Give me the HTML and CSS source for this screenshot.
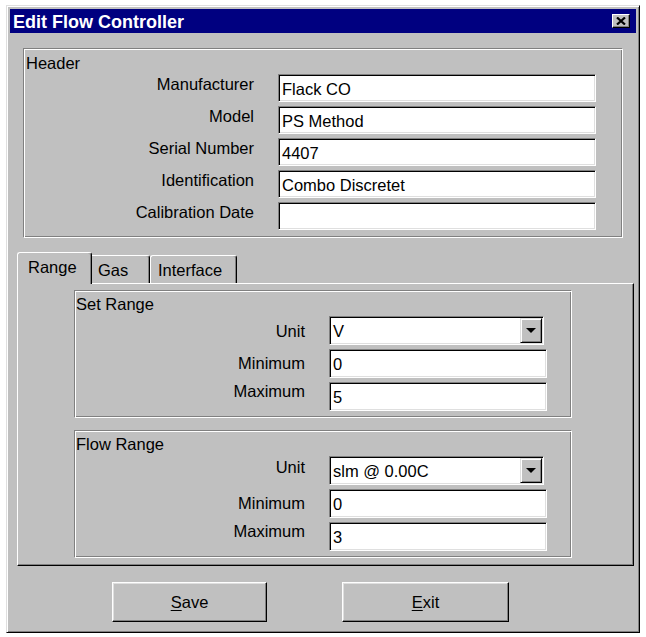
FILE: index.html
```html
<!DOCTYPE html>
<html>
<head>
<meta charset="utf-8">
<title>Edit Flow Controller</title>
<link rel="stylesheet" href="styles.css">
</head>
<body>
<div class="window">
  <div class="titlebar">
    <span class="title">Edit Flow Controller</span>
    <span class="close">
      <svg width="10" height="8" viewBox="0 0 10 8"><path d="M1 0.5 L9 7.5 M9 0.5 L1 7.5" stroke="#000" stroke-width="2.2" fill="none"/></svg>
    </span>
  </div>

  <div class="group header-group">
    <div class="caption">Header</div>
    <div class="form header-form">
      <div class="lbl pt1">Manufacturer</div><div class="field">Flack CO</div>
      <div class="lbl pt1">Model</div><div class="field">PS Method</div>
      <div class="lbl pt1">Serial Number</div><div class="field">4407</div>
      <div class="lbl pt1">Identification</div><div class="field">Combo Discretet</div>
      <div class="lbl pt1">Calibration Date</div><div class="field"></div>
    </div>
  </div>

  <div class="tabs">
    <div class="tab tab-range selected">Range</div>
    <div class="tab tab-gas">Gas</div>
    <div class="tab tab-interface">Interface</div>
  </div>

  <div class="panel">
    <div class="group range-group">
      <div class="caption">Set Range</div>
      <div class="form range-form">
        <div class="lbl pt6">Unit</div>
        <div class="combo"><span class="combo-text">V</span><span class="drop"><span class="arrow"></span></span></div>
        <div class="lbl pt5">Minimum</div><div class="field">0</div>
        <div class="lbl pt0">Maximum</div><div class="field">5</div>
      </div>
    </div>
    <div class="group range-group">
      <div class="caption">Flow Range</div>
      <div class="form range-form">
        <div class="lbl pt2">Unit</div>
        <div class="combo"><span class="combo-text">slm @ 0.00C</span><span class="drop"><span class="arrow"></span></span></div>
        <div class="lbl pt5">Minimum</div><div class="field">0</div>
        <div class="lbl pt0">Maximum</div><div class="field">3</div>
      </div>
    </div>
  </div>

  <div class="buttons">
    <div class="btn btn-save"><u>S</u>ave</div>
    <div class="btn btn-exit"><u>E</u>xit</div>
  </div>
</div>
</body>
</html>
```

FILE: styles.css
```css
* { box-sizing: border-box; }
html, body { margin: 0; padding: 0; background: #fff; }
body {
  font-family: "Liberation Sans", Arial, sans-serif;
  font-size: 16.5px;
  line-height: 19px;
  color: #000;
}

.window {
  width: 634px;
  height: 628px;
  margin: 5px 0 0 6px;
  background: #c0c0c0;
  border: 1px solid;
  border-color: #dfdfdf #000 #000 #dfdfdf;
  box-shadow: inset 1px 1px 0 #fff, inset -1px -1px 0 #808080;
  padding: 3px;
}

.titlebar {
  height: 24px;
  background: #000080;
  color: #fff;
  display: flex;
  justify-content: space-between;
  align-items: flex-start;
  padding: 0 6px 0 3px;
}
.title {
  font-weight: bold;
  font-size: 18px;
  line-height: 22px;
  padding-top: 2px;
  white-space: nowrap;
}
.close {
  width: 18px;
  height: 14px;
  margin-top: 5px;
  background: #c0c0c0;
  border: 1px solid;
  border-color: #fff #000 #000 #fff;
  box-shadow: inset -1px -1px 0 #808080;
  display: flex;
  align-items: center;
  justify-content: center;
}
.close svg { display: block; }

.group {
  border: 1px solid;
  border-color: #808080 #fff #fff #808080;
  box-shadow: inset 1px 1px 0 #fff, inset -1px -1px 0 #808080;
}
.caption { padding-left: 2px; white-space: nowrap; }

.header-group {
  width: 600px;
  margin: 15px 0 0 13px;
  padding: 5px 0 7px;
}

.form {
  display: grid;
  column-gap: 24px;
  row-gap: 4px;
}
.header-form {
  grid-template-columns: 230px 318px;
  grid-auto-rows: 28px;
  margin-top: 1px;
}
.range-form {
  grid-template-columns: 230px 218px;
  grid-auto-rows: 29px;
  margin-top: 2px;
}

.lbl { text-align: right; white-space: nowrap; }
.pt0 { padding-top: 0; }
.pt1 { padding-top: 1px; }
.pt2 { padding-top: 2px; }
.pt5 { padding-top: 5px; }
.pt6 { padding-top: 6px; }

.field {
  background: #fff;
  border: 1px solid;
  border-color: #808080 #fff #fff #808080;
  box-shadow: inset 1px 1px 0 #000, inset -1px -1px 0 #dfdfdf;
  padding: 5px 3px 0;
  white-space: nowrap;
  overflow: hidden;
}

.combo {
  width: 215px;
  display: flex;
  background: #fff;
  border: 1px solid;
  border-color: #808080 #fff #fff #808080;
  box-shadow: inset 1px 1px 0 #000, inset -1px -1px 0 #dfdfdf;
  padding: 1px;
}
.combo-text {
  flex: 1;
  padding: 4px 2px 0;
  white-space: nowrap;
}
.drop {
  width: 22px;
  background: #c0c0c0;
  border: 1px solid;
  border-color: #dfdfdf #000 #000 #dfdfdf;
  box-shadow: inset 1px 1px 0 #fff, inset -1px -1px 0 #808080;
  display: flex;
  align-items: center;
  justify-content: center;
}
.arrow {
  width: 0;
  height: 0;
  border-left: 5px solid transparent;
  border-right: 5px solid transparent;
  border-top: 5px solid #000;
}

.tabs {
  display: flex;
  align-items: flex-end;
  height: 31px;
  margin: 14px 0 0 7px;
}
.tab {
  height: 28px;
  background: #c0c0c0;
  border-top: 1px solid #fff;
  border-left: 1px solid #fff;
  border-right: 1px solid #000;
  box-shadow: inset -1px 0 0 #808080;
  border-radius: 3px 3px 0 0;
  padding-top: 5px;
  white-space: nowrap;
}
.tab.selected {
  height: 32px;
  margin-bottom: -1px;
  position: relative;
  z-index: 1;
}
.tab-range { width: 75px; padding-left: 10px; }
.tab-gas { width: 58px; padding-left: 6px; border-left: none; border-top-left-radius: 0; }
.tab-interface { width: 87px; padding-left: 7px; }

.panel {
  width: 617px;
  margin-left: 7px;
  background: #c0c0c0;
  border: 1px solid;
  border-color: #fff #000 #000 #fff;
  box-shadow: inset -1px -1px 0 #808080;
  padding: 6px 0 7px 56px;
}
.range-group {
  width: 498px;
  padding: 4px 0 6px;
}
.range-group .caption { padding-left: 1px; }
.range-group + .range-group { margin-top: 12px; }

.buttons {
  display: flex;
  margin-top: 16px;
}
.btn {
  height: 40px;
  background: #c0c0c0;
  border: 1px solid;
  border-color: #fff #000 #000 #fff;
  box-shadow: inset -1px -1px 0 #808080, inset 1px 1px 0 #dfdfdf;
  text-align: center;
  padding-top: 10px;
}
.btn u { text-underline-offset: 2px; }
.btn-save { width: 155px; margin-left: 102px; }
.btn-exit { width: 167px; margin-left: 75px; }
```
